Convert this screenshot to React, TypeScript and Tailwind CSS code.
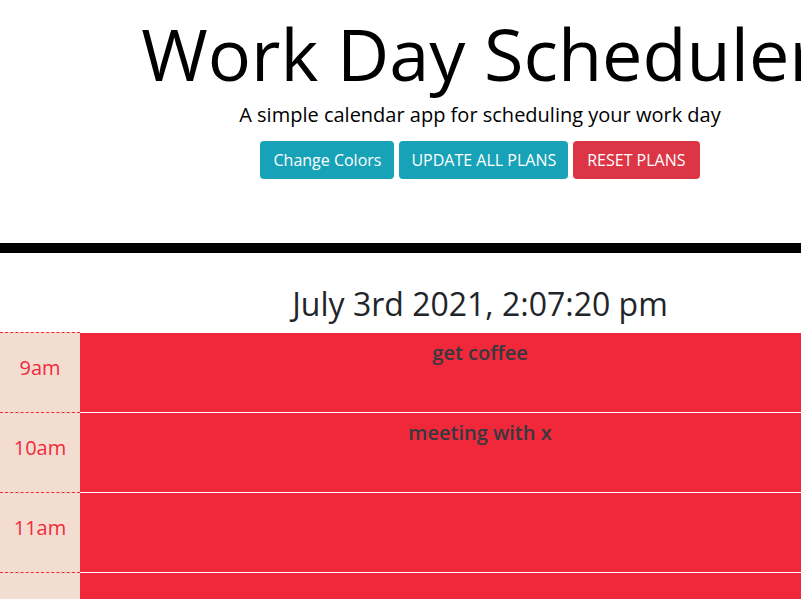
import React from "react";

const blocks = [
  { hour: "9am", plan: "get coffee" },
  { hour: "10am", plan: "meeting with x" },
  { hour: "11am", plan: "" },
  { hour: "12pm", plan: "" },
  { hour: "1pm", plan: "" },
];

export default function App() {
  return (
    <div className="w-[801px] h-[599px] overflow-hidden bg-white font-['Open_Sans',sans-serif]">
      <div className="w-[960px]">
        {/* Jumbotron header */}
        <header className="h-[253px] border-b-[10px] border-black pt-[10px] text-center">
          <h1 className="text-[72px] leading-[1.2] font-normal text-black">Work Day Scheduler</h1>
          <p className="mt-[4px] text-[20px] leading-[1.5] text-black">
            A simple calendar app for scheduling your work day
          </p>
          <div className="mt-[11px] flex justify-center gap-[5px]">
            <button className="h-[38px] rounded-[4px] bg-[#17a2b8] px-[13px] text-[16px] text-white">
              Change Colors
            </button>
            <button className="h-[38px] rounded-[4px] bg-[#17a2b8] px-[12px] text-[16px] text-white">
              UPDATE ALL PLANS
            </button>
            <button className="h-[38px] rounded-[4px] bg-[#dc3545] px-[14px] text-[16px] text-white">
              RESET PLANS
            </button>
          </div>
        </header>

        <div className="h-[79px] pt-[32px] text-center text-[32px] leading-[1.2] text-[#212529]">
          July 3rd 2021, 2:07:20 pm
        </div>

        {/* Time blocks */}
        <div className="flex flex-col">
          {blocks.map((b) => (
            <div key={b.hour} className="flex h-[80px]">
              <div className="w-[80px] border-t border-dashed border-[#f2293c] bg-[#f2ddd0] pt-[20px] text-center text-[20px] leading-[1.5] text-[#f22b3c]">
                {b.hour}
              </div>
              <div className="w-[800px] border-t border-white bg-[#f1273a] pt-[5px] text-center text-[20px] font-semibold leading-[1.5] text-[#343a40]">
                {b.plan}
              </div>
              <button className="w-[80px] border-t border-white bg-[#06aed5] text-white">Save</button>
            </div>
          ))}
        </div>
      </div>
    </div>
  );
}
